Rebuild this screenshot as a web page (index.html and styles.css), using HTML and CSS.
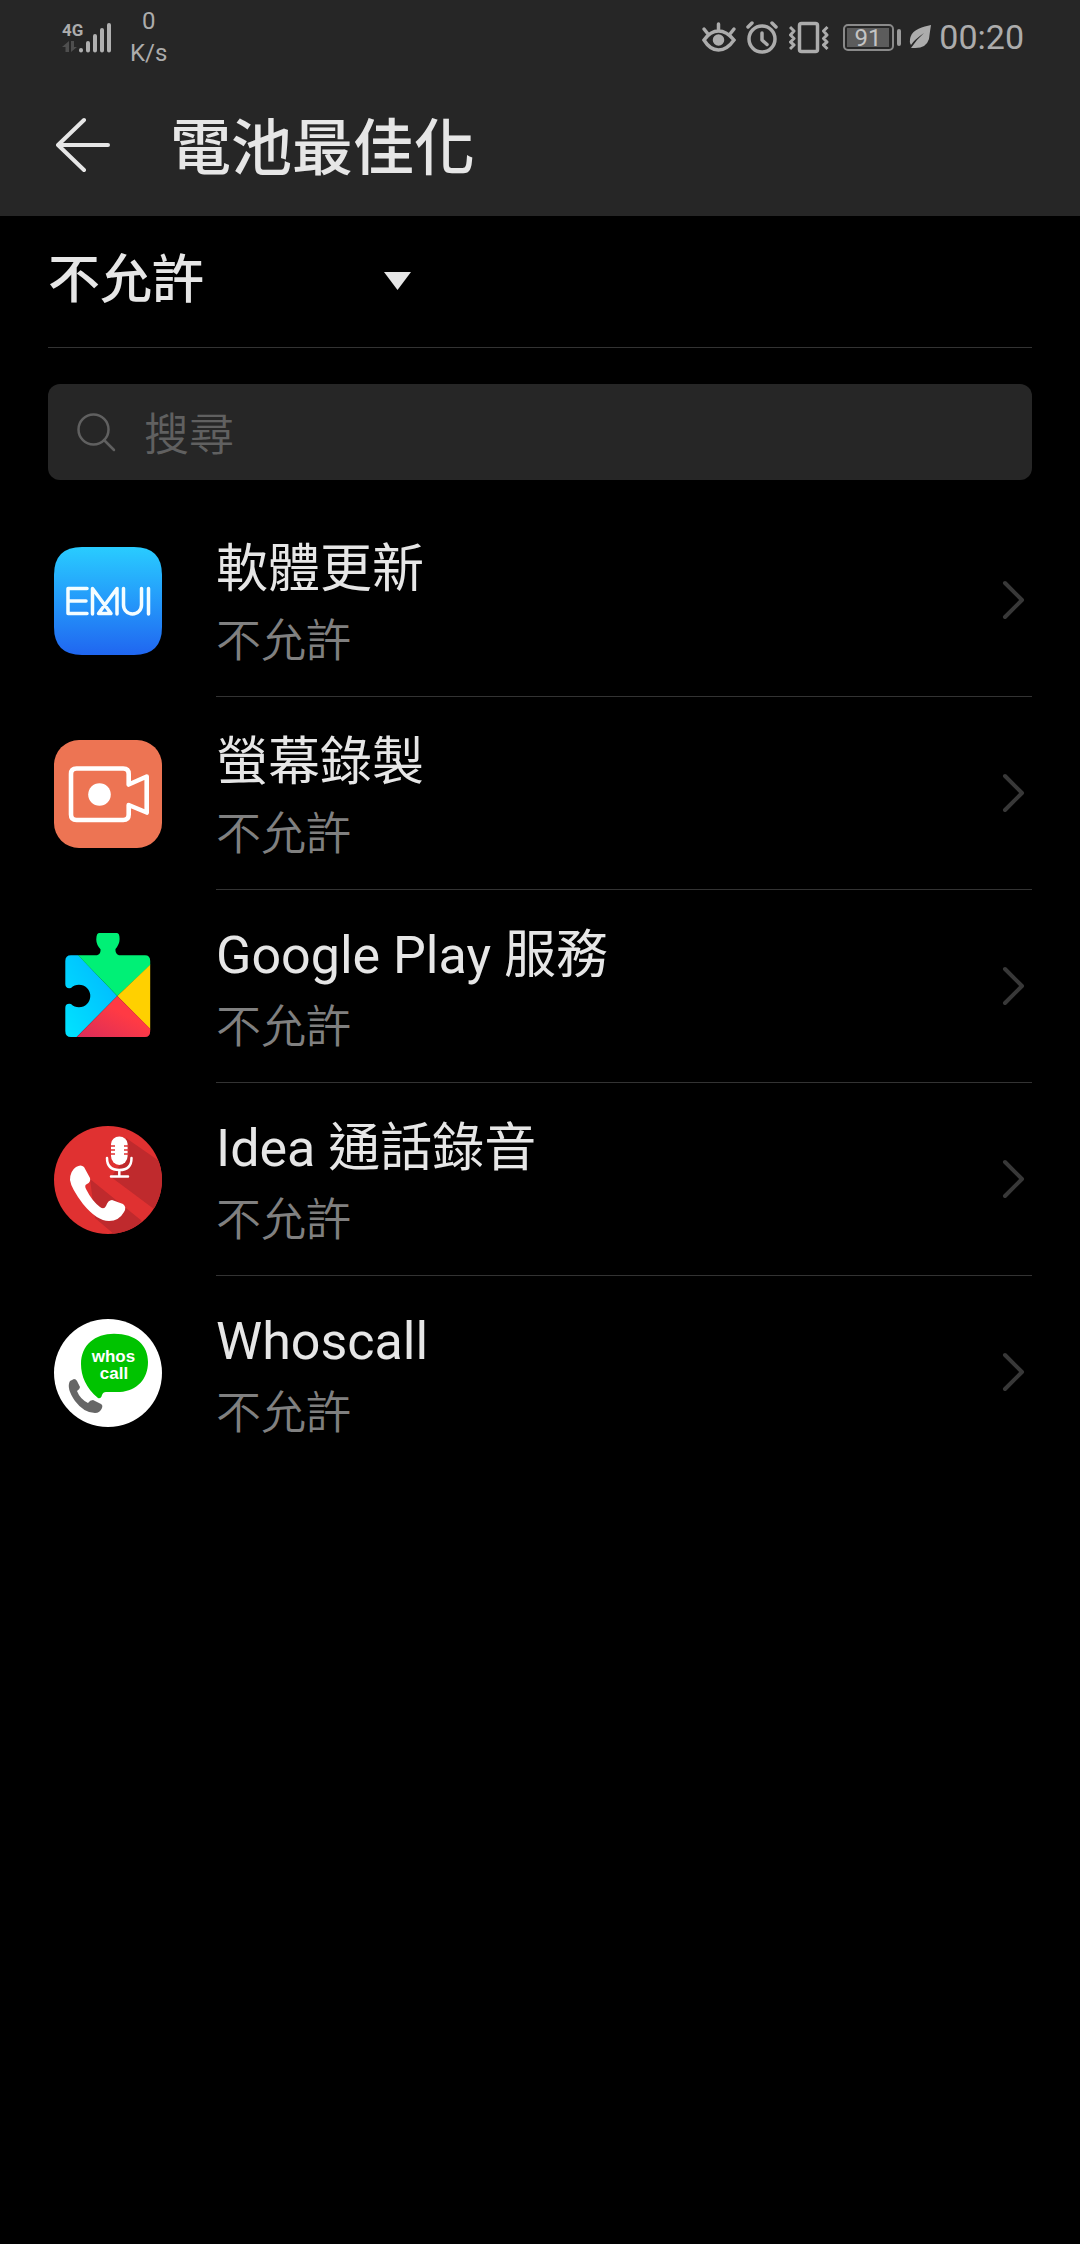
FILE: index.html
```html
<!DOCTYPE html>
<html lang="zh-Hant">
<head>
<meta charset="utf-8">
<meta name="viewport" content="width=device-width, initial-scale=1">
<title>電池最佳化</title>
<link rel="stylesheet" href="styles.css">
</head>
<body>
<header class="top">
  <div class="status">
    <div class="network">
      <div class="signal">
        <span class="net-type">4G</span>
        <svg class="bars" width="52" height="32" viewBox="0 0 52 32" aria-hidden="true">
          <g fill="#4e4e4e"><path d="M0 26l7-6v11H3.500V26z"/><path d="M9 20h3v6h3l-6 5z"/></g>
          <g stroke="#b0b0b0" stroke-width="4" stroke-linecap="round"><path d="M19 29v.5M26 22v7.500M33 15v14.500M40 9v20.500M47 4v25.500"/></g>
        </svg>
      </div>
      <div class="speed"><span>0</span><span>K/s</span></div>
    </div>
    <div class="indicators">
      <svg width="36" height="34" viewBox="0 0 36 34" aria-hidden="true" fill="none" stroke="#acacac" stroke-width="3.500" stroke-linecap="round">
        <path d="M3 20Q9.500 11 17.500 11T33 20Q26 30 17.500 30T3 20zM17.500 4v5M3 9l4 5M33 9l-4 5"/><circle cx="17.500" cy="20" r="4" fill="#acacac"/>
      </svg>
      <svg width="36" height="34" viewBox="0 0 36 34" aria-hidden="true" fill="none" stroke="#acacac" stroke-width="3.500" stroke-linecap="round" stroke-linejoin="round">
        <circle cx="17" cy="19" r="13"/><path d="M17 13v7l5 4.500M3 7l4-4M31 7l-4-4"/>
      </svg>
      <svg width="40" height="34" viewBox="0 0 40 34" aria-hidden="true" fill="none" stroke="#acacac" stroke-width="3" stroke-linejoin="round">
        <rect x="10.500" y="3.500" width="18" height="28" rx="2" stroke-width="3.500"/>
        <path d="M1 7l4 4-3.500 4L5 18.500 1.500 22 5 25l-4 4M38.500 7l-4 4 3.500 4-3.500 3.500L38 22l-3.500 3 4 4"/>
      </svg>
      <svg width="64" height="34" viewBox="0 0 64 34" role="img" aria-label="91%">
        <rect x="7" y="5" width="49" height="25" rx="4" fill="none" stroke="#8a8a8a" stroke-width="2"/>
        <rect x="10" y="8" width="42" height="19" fill="#5c5c5c"/>
        <rect x="60" y="9" width="4" height="17" rx="2" fill="#9a9a9a"/>
        <text class="level" x="31" y="26" text-anchor="middle">91</text>
      </svg>
      <svg width="22" height="34" viewBox="0 0 22 34" aria-hidden="true">
        <path d="M22 5c-8 2-18 4-20.500 12Q0 22 2 25 5 20 15 13 8 19 2 28h2q13 1 16-9 1-8 2-14z" fill="#acacac"/>
      </svg>
      <time class="clock">00:20</time>
    </div>
  </div>
  <div class="appbar">
    <button class="back" type="button" aria-label="返回">
      <svg width="54" height="56" viewBox="0 0 54 56" aria-hidden="true" fill="none" stroke="#e6e6e6" stroke-width="4" stroke-linecap="round" stroke-linejoin="round"><path d="M28 3L2 28l26 25M2 28h50"/></svg>
    </button>
    <h1 class="title">電池最佳化</h1>
  </div>
</header>
<main class="content">
  <div class="filter">
    <div class="dropdown">
      <select class="dropdown-select" aria-label="篩選">
        <option>不允許</option>
        <option>所有應用程式</option>
      </select>
      <svg class="dropdown-arrow" width="27" height="18" viewBox="0 0 27 18" aria-hidden="true"><path d="M0 0h27L13.500 18z" fill="#e6e6e6"/></svg>
    </div>
  </div>
  <label class="search">
    <svg width="40" height="40" viewBox="0 0 40 40" aria-hidden="true" fill="none" stroke="#606060" stroke-width="2.500" stroke-linecap="round"><circle cx="17.500" cy="17.500" r="15"/><path d="M28 28l10 10"/></svg>
    <input class="search-input" type="search" placeholder="搜尋" aria-label="搜尋">
  </label>
  <ul class="apps">
    <li><a class="app" href="#update">
      <svg class="app-icon" viewBox="0 0 108 108" aria-hidden="true">
        <defs><linearGradient id="emui" x1="0" y1="0" x2="0" y2="1"><stop offset="0" stop-color="#29ccff"/><stop offset=".5" stop-color="#2499fa"/><stop offset="1" stop-color="#2066f0"/></linearGradient></defs>
        <path d="M28 0h52q28 0 28 28v52q0 28-28 28H28Q0 108 0 80V28Q0 0 28 0z" fill="url(#emui)"/>
        <g fill="none" stroke="#f4fdff" stroke-width="3.500" stroke-linecap="round" stroke-linejoin="round"><path d="M33 41.500H14v25h19M14 54h18M38.500 67V41.500L57 66.500H44.500L63 41.500V67M69.500 41.500V58a9 9 0 0 0 18 0V41.500M94.500 41.500V67"/></g>
      </svg>
      <span class="app-body"><span class="app-text"><span class="app-name">軟體更新</span><span class="app-state">不允許</span></span>
      <svg class="chevron" viewBox="0 0 24 40" aria-hidden="true"><path d="M3 3l17 17L3 37"/></svg></span>
    </a></li>
    <li><a class="app" href="#recorder">
      <svg class="app-icon" viewBox="0 0 108 108" aria-hidden="true">
        <rect width="108" height="108" rx="25" fill="#ed7453"/>
        <path d="M74.700 44.500V34q0-5.500-5.500-5.500H22.500q-5.500 0-5.500 5.500v40.500q0 5.500 5.500 5.500h46.700q5.500 0 5.500-5.500V65l18 7.500v-36z" fill="none" stroke="#fff" stroke-width="4.600" stroke-linejoin="round"/>
        <circle cx="45.500" cy="54.500" r="11.300" fill="#fff"/>
      </svg>
      <span class="app-body"><span class="app-text"><span class="app-name">螢幕錄製</span><span class="app-state">不允許</span></span>
      <svg class="chevron" viewBox="0 0 24 40" aria-hidden="true"><path d="M3 3l17 17L3 37"/></svg></span>
    </a></li>
    <li><a class="app" href="#play">
      <svg class="app-icon" viewBox="0 0 108 108" aria-hidden="true">
        <defs>
          <linearGradient id="play-blue" x1="1" y1="0" x2="0" y2="1"><stop offset="0" stop-color="#00b4ff"/><stop offset="1" stop-color="#00e4ff"/></linearGradient>
          <linearGradient id="play-red" x1="1" y1="0" x2="0" y2="1"><stop offset=".4" stop-color="#ff3a44"/><stop offset="1" stop-color="#d92c5a"/></linearGradient>
          <clipPath id="piece"><path d="M17 22.300H43q4-1 3.500-6Q42 11 42.300 6 42.500 0 45 0H63q2.600 0 2.600 6 0 5-4.100 10-.5 5 3.500 6.300H91q5.200 0 5.200 5.700V98q0 6-5.200 6H17q-5.700 0-5.700-6V75q0-5 5.700-4a11.300 11.300 0 1 0 0-16q-5.700 1-5.700-4V28q0-5.700 5.700-5.700z"/></clipPath>
        </defs>
        <g clip-path="url(#piece)">
          <path d="M11 22H24L63.300 63 22.700 104H11z" fill="url(#play-blue)"/>
          <path d="M24 22.300L42 0H66L97 22V31.500L63.300 63z" fill="#00f076"/>
          <path d="M97 31v66L63.300 63z" fill="#ffd000"/>
          <path d="M63.300 63L97 96.500V104H22.700z" fill="url(#play-red)"/>
        </g>
      </svg>
      <span class="app-body"><span class="app-text"><span class="app-name">Google Play 服務</span><span class="app-state">不允許</span></span>
      <svg class="chevron" viewBox="0 0 24 40" aria-hidden="true"><path d="M3 3l17 17L3 37"/></svg></span>
    </a></li>
    <li><a class="app" href="#callrecorder">
      <svg class="app-icon" viewBox="0 0 108 108" aria-hidden="true">
        <defs><clipPath id="disc"><circle cx="54" cy="54" r="54"/></clipPath></defs>
        <g clip-path="url(#disc)">
          <path d="M0 0h108v108H0z" fill="#e03131"/>
          <path d="M72 12l36 25v52L57 51l9-12zM36 53l52 42-20 20L41 92z" fill="#bf2a2d"/>
        </g>
        <path d="M57 18a8.300 7.500 0 0 1 16.600 0v12a8.300 9 0 0 1-16.600 0z" fill="#fff"/>
        <path d="M56 20h5M56 24h5M56 28h5M70 20h5M70 24h5M70 28h5" stroke="#e03131" stroke-width="1.500"/>
        <path d="M53 32q0 12 12.300 12T77.500 32M65.300 44v6M57 50.500h17" fill="none" stroke="#fff" stroke-width="2.500" stroke-linecap="round"/>
        <path d="M22 41q5-3 8 0l6 11q1 4-3 6-3 1-1 5 6 12 14 18 4 3 6-1 2-6 6-6l11 4q4 3 1 8-5 9-15 9-12 0-26-17Q17 62 16 54q0-9 6-13z" fill="#fff"/>
      </svg>
      <span class="app-body"><span class="app-text"><span class="app-name">Idea 通話錄音</span><span class="app-state">不允許</span></span>
      <svg class="chevron" viewBox="0 0 24 40" aria-hidden="true"><path d="M3 3l17 17L3 37"/></svg></span>
    </a></li>
    <li><a class="app" href="#whoscall">
      <svg class="app-icon" viewBox="0 0 108 108" aria-hidden="true">
        <circle cx="54" cy="54" r="54" fill="#fff"/>
        <path d="M60 14.700C82 14.700 94 26 94 43S83 72 66 73H52q-3 0-4 3-1 4-4 3C32 69 27 57 27 45 27 26 41 14.700 60 14.700z" fill="#00c300"/>
        <text class="logo-text" x="59.500" y="43" text-anchor="middle">whos</text>
        <text class="logo-text" x="60" y="60" text-anchor="middle">call</text>
        <path d="M16 62l4-2q2 0 3 2l3 6q0 2-3 4 3 8 11 12 2-3 5-3l8 4q2 1 1 4-2 5-7 5-11 0-20-12-9-13-5-20z" fill="#666"/>
      </svg>
      <span class="app-body"><span class="app-text"><span class="app-name">Whoscall</span><span class="app-state">不允許</span></span>
      <svg class="chevron" viewBox="0 0 24 40" aria-hidden="true"><path d="M3 3l17 17L3 37"/></svg></span>
    </a></li>
  </ul>
</main>
</body>
</html>
```
FILE: styles.css
```css
* { box-sizing: border-box; }

body {
  margin: 0;
  background: #000;
  color: #e6e6e6;
  font-family: Roboto, "Noto Sans CJK TC", sans-serif;
}

svg { display: block; flex: none; }

.top { background: #262626; }

.status {
  display: flex;
  justify-content: space-between;
  align-items: center;
  height: 74px;
  padding: 0 56px 0 62px;
  color: #acacac;
}

.network { display: flex; align-items: center; gap: 16px; }
.signal { display: grid; }
.signal > * { grid-area: 1 / 1; }
.net-type {
  align-self: start;
  font: bold 17px/18px "Liberation Sans Narrow", Roboto, sans-serif;
}
.speed {
  display: flex;
  flex-direction: column;
  align-items: center;
  font-size: 24px;
  line-height: 32px;
}

.indicators { display: flex; align-items: center; gap: 8px; }
.level { font-size: 24px; fill: #c4c4c4; }
.clock { font-size: 34px; line-height: 40px; }

.appbar {
  display: flex;
  align-items: center;
  gap: 60px;
  height: 142px;
  padding: 0 56px;
}
.back { padding: 0; border: 0; background: none; }
.title {
  margin: 0;
  padding-top: 8px;
  font-size: 61px;
  line-height: 72px;
  font-weight: 500;
}

.content { padding: 0 48px; }

.filter {
  height: 132px;
  padding-bottom: 2px;
  border-bottom: 1px solid #333;
}
.dropdown {
  display: grid;
  grid-template-columns: 336px 36px;
  align-items: center;
  width: max-content;
  height: 100%;
}
.dropdown-select {
  grid-area: 1 / 1 / 2 / 3;
  width: 100%;
  height: 72px;
  padding: 0;
  border: 0;
  appearance: none;
  background: #000;
  color: inherit;
  font: 500 52px/72px Roboto, "Noto Sans CJK TC", sans-serif;
}
.dropdown-arrow { grid-area: 1 / 2; pointer-events: none; }

.search {
  display: flex;
  align-items: center;
  gap: 28px;
  height: 96px;
  margin: 36px 0 24px;
  padding: 0 28px;
  border-radius: 12px;
  background: #262626;
}
.search-input {
  flex: 1;
  min-width: 0;
  padding: 0;
  border: 0;
  outline: 0;
  background: none;
  color: inherit;
  font: 350 45px/64px "Noto Sans CJK TC", sans-serif;
}
.search-input::placeholder { color: #606060; opacity: 1; }

.apps { margin: 0; padding: 0; list-style: none; }
.app {
  display: flex;
  align-items: center;
  gap: 54px;
  padding-left: 6px;
  color: inherit;
  text-decoration: none;
}
.app-icon { width: 108px; height: 108px; }
.app-body {
  display: flex;
  flex: 1;
  align-items: center;
  justify-content: space-between;
  height: 193px;
  padding-right: 6px;
  border-bottom: 1px solid #333;
}
.apps li:last-child .app-body { border-bottom-color: transparent; }
.app-text { display: flex; flex-direction: column; }
.app-name { font-size: 52px; line-height: 76px; }
.app-state {
  color: #808080;
  font: 350 45px/60px "Noto Sans CJK TC", sans-serif;
}
.chevron {
  width: 24px;
  height: 40px;
  fill: none;
  stroke: #383838;
  stroke-width: 4;
  stroke-linecap: round;
  stroke-linejoin: round;
}
.logo-text { fill: #fff; font: bold 17px "Liberation Sans", sans-serif; }
```
